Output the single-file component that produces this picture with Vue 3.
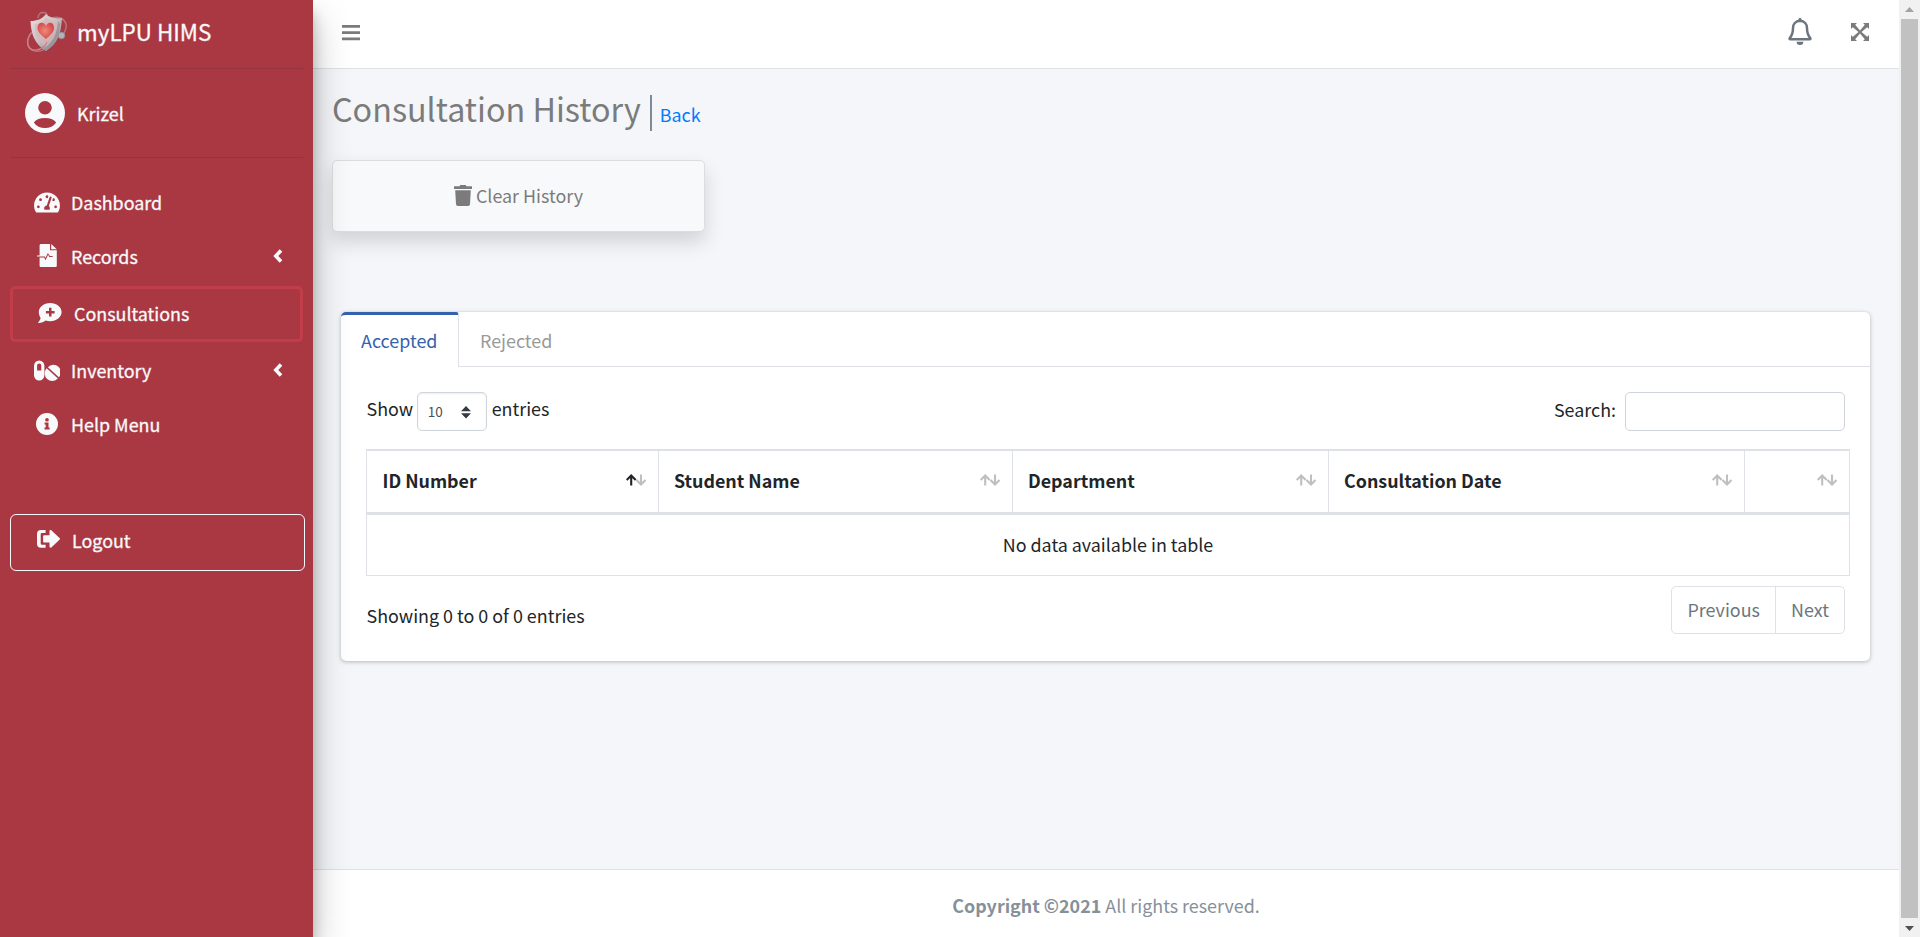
<script setup>
const columns = [
  { label: 'ID Number', sorted: true, cls: 'c1' },
  { label: 'Student Name', cls: 'c2' },
  { label: 'Department', cls: 'c3' },
  { label: 'Consultation Date', cls: 'c4' },
  { label: '', cls: 'c5' },
]
</script>

<template>
  <div class="page">
    <aside class="sidebar">
      <div class="brand">
        <svg class="logo" viewBox="0 0 42 42">
          <defs>
            <linearGradient id="steel" x1="0" y1="0" x2="1" y2="1">
              <stop offset="0" stop-color="#e9dfe0" />
              <stop offset=".5" stop-color="#c9bfc2" />
              <stop offset="1" stop-color="#767a80" />
            </linearGradient>
            <radialGradient id="heart" cx=".45" cy=".5" r=".6">
              <stop offset="0" stop-color="#f08a78" />
              <stop offset="1" stop-color="#d2424a" />
            </radialGradient>
          </defs>
          <path d="M12 7c0-4 3-5.500 5-5.500s4 1 4 3M26 7c6-2 12 0 14 6 1 4-1 7-2 9M6 21c-6 7-6 17 3 19 8 1 14-3 13-10" fill="none" stroke="#b9757b" stroke-width="1.500" />
          <path d="M20 3c4 4 10 5 16 4-1 14-3 25-16 33C8 33 5 22 4.500 10 11 10 16 8 20 3z" fill="url(#steel)" />
          <path d="M20 7c4 3 8 4 12 4-1 11-3 19-12 25C11 30 9 22 8.500 13 13 13 17 11 20 7z" fill="#d8b6b7" opacity=".75" />
          <path d="M34 13c-1 10-4 19-14 27l-3-2C28 31 31 22 32 10z" fill="#92949a" opacity=".8" />
          <path d="M20 28c-5-4-8.500-7-8.500-11 0-6 6.500-7 8.500-2 2-5 8-4 8 2 0 4-3.500 7-8 11z" fill="url(#heart)" />
          <path d="M5 22c-6 8-4 17 4 17 5 0 10-3 12-8" fill="none" stroke="#c58187" stroke-width="1.200" />
          <circle cx="35.500" cy="24.500" r="3.300" fill="#b9afb5" stroke="#8c8b93" stroke-width=".8" />
        </svg>
        <span class="brand-text">myLPU HIMS</span>
      </div>
      <div class="user">
        <svg class="avatar" viewBox="0 0 40 40">
          <path fill-rule="evenodd" d="M20 0a20 20 0 1 0 0 40 20 20 0 0 0 0-40zM20 8a6.800 6.800 0 1 1 0 13.600A6.800 6.800 0 0 1 20 8zM8.800 29.500C11 26.300 15 25 20 25s9 1.300 11.200 4.500C28.700 33.200 24.600 35 20 35s-8.700-1.800-11.200-5.500z" />
        </svg>
        <span>Krizel</span>
      </div>
      <nav class="menu">
        <a class="item">
          <svg class="ic wide" viewBox="0 0 576 512"><path d="M288 32C128.940 32 0 160.940 0 320c0 52.800 14.250 102.260 39.060 144.800 5.610 9.620 16.300 15.200 27.440 15.200h443c11.140 0 21.830-5.580 27.440-15.200C561.750 422.260 576 372.800 576 320c0-159.060-128.940-288-288-288zm0 64c14.710 0 26.580 10.130 30.320 23.650-1.110 2.260-2.640 4.230-3.450 6.670l-9.220 27.670c-5.130 3.490-10.970 6.010-17.640 6.010-17.670 0-32-14.330-32-32S270.330 96 288 96zM96 384c-17.670 0-32-14.330-32-32s14.330-32 32-32 32 14.330 32 32-14.330 32-32 32zm48-160c-17.670 0-32-14.330-32-32s14.330-32 32-32 32 14.330 32 32-14.330 32-32 32zm246.770-72.410l-61.330 184C343.130 347.330 352 364.540 352 384c0 11.720-3.380 22.550-8.880 32H232.880c-5.500-9.450-8.880-20.280-8.880-32 0-33.940 26.500-61.430 59.900-63.590l61.340-184.010c4.170-12.560 17.730-19.450 30.360-15.170 12.570 4.190 19.350 17.790 15.170 30.360zm14.660 57.200l15.520-46.550c3.470-1.290 7.130-2.230 11.050-2.230 17.670 0 32 14.330 32 32s-14.330 32-32 32c-11.380-.010-20.890-6.280-26.570-15.220zM480 384c-17.670 0-32-14.330-32-32s14.330-32 32-32 32 14.330 32 32-14.330 32-32 32z" /></svg>
          <span>Dashboard</span>
        </a>
        <a class="item">
          <svg class="ic file" viewBox="0 0 21 23">
            <path d="M4.300 0H13v6.200h6.800V21.800a1.200 1.200 0 0 1-1.200 1.200H3.800a1.200 1.200 0 0 1-1.200-1.200V13.600h4.600l1.300 2.600 2.600-5.500 1.200 2.300h3.300v-.9h-2.700L10.900 8.900 8.500 14l-.7-1.400H0v-1.100h2.600V1.500A1.500 1.500 0 0 1 4.300 0z" /><path d="M14.200 0l5.600 5.200h-5.600z" />
          </svg>
          <span>Records</span>
          <svg class="chev" viewBox="0 0 10 14"><path d="M8 1.500L2.800 7 8 12.500" /></svg>
        </a>
        <a class="item active">
          <svg class="ic chat" viewBox="0 0 24 21">
            <path fill-rule="evenodd" d="M12.200 0C18.600 0 23.600 4 23.600 9.100s-5 9.100-11.400 9.100c-1.700 0-3.300-.3-4.700-.8C5.900 18.600 3.400 20 .6 20c-.5 0-.6-.5-.3-.8 1-1.100 2-2.700 2.300-4.300C1.400 13.200.8 11.200.8 9.100.8 4 5.800 0 12.200 0zM11 4.800v3.100H7.900v2.500H11v3.100h2.500v-3.100h3.100V7.900h-3.100V4.800z" />
          </svg>
          <span>Consultations</span>
        </a>
        <a class="item">
          <svg class="ic wide" viewBox="0 0 26 20">
            <path fill-rule="evenodd" d="M5.200 0a5.200 5.200 0 0 1 5.200 5.200v9.600a5.200 5.200 0 0 1-10.400 0V5.200A5.200 5.200 0 0 1 5.200 0zm0 3A2.100 2.100 0 0 0 3.100 5.200V10h4.200V5.200A2.100 2.100 0 0 0 5.200 3z" />
            <path d="M12.700 7.700L23.900 18a7.200 7.200 0 0 1-11.200-10.300zM13.900 6.700A7.200 7.200 0 0 1 24.900 16.800z" />
          </svg>
          <span>Inventory</span>
          <svg class="chev" viewBox="0 0 10 14"><path d="M8 1.500L2.800 7 8 12.500" /></svg>
        </a>
        <a class="item">
          <svg class="ic info" viewBox="0 0 22 22"><path fill-rule="evenodd" d="M11 0a11 11 0 1 0 0 22 11 11 0 0 0 0-22zm0 4.900a1.850 1.850 0 1 1 0 3.700 1.850 1.850 0 0 1 0-3.700zM8.600 9.600h3.900v5h1.100v2H8.500v-2h1.200v-3H8.600z" /></svg>
          <span>Help Menu</span>
        </a>
      </nav>
      <a class="logout">
        <svg viewBox="0 0 23 18"><path d="M8.600 0v3H4.900a1.200 1.200 0 0 0-1.200 1.200v9.400a1.200 1.200 0 0 0 1.200 1.200h3.700v3H4a4 4 0 0 1-4-4V4a4 4 0 0 1 4-4zM14.300.3l8.200 7.700a1.100 1.100 0 0 1 0 1.700l-8.200 7.700c-.7.600-1.800.2-1.800-.8v-4.100H7.100a1 1 0 0 1-1-1V6.200a1 1 0 0 1 1-1h5.400V1.100c0-1 1.100-1.400 1.800-.8z" /></svg>
        <span>Logout</span>
      </a>
    </aside>

    <div class="main">
      <header class="topbar">
        <svg class="bars" viewBox="0 0 18 16"><path d="M0 0h18v2.700H0zM0 6.300h18V9H0zM0 12.600h18v2.700H0z" /></svg>
        <span class="spacer"></span>
        <svg class="bell" viewBox="0 0 24 27"><path d="M12 2.700C7.500 3 5 6.200 5 10c0 5.500-1.200 7.800-3.200 10-.5.700-.2 1.300.6 1.300h19.200c.8 0 1.100-.6.600-1.300-2-2.200-3.200-4.500-3.200-10 0-3.800-2.500-7-7-7.300z" fill="none" stroke="currentColor" stroke-width="2.500" /><path d="M10.500 1.300a1.500 1.300 0 0 1 3 0V3h-3zM8.600 23.700h6.800a3.400 3.300 0 0 1-6.800 0z" fill="currentColor" /></svg>
        <svg class="expand" viewBox="0 0 18 18"><path d="M0 0h6L4.200 1.800 9 7.500l4.800-5.700L12 0h6v6l-1.800-1.800L10.500 9l5.700 4.800L18 12v6h-6l1.800-1.800L9 10.500l-4.800 5.700L6 18H0v-6l1.800 1.800L7.500 9 1.800 4.200 0 6z" /></svg>
      </header>

      <main class="content">
        <div class="title">
          <h1>Consultation History</h1><span class="bar"></span><a class="back">Back</a>
        </div>
        <button class="clear">
          <svg viewBox="0 0 18 21"><path d="M5.600 1.200L6.200 0h5.600l.6 1.200H18v2.700H0V1.200zM1.200 5.300h15.600L16 19a2 2 0 0 1-2 2H4a2 2 0 0 1-2-2z" /></svg>
          <span>Clear History</span>
        </button>

        <section class="card">
          <div class="tabs">
            <a class="tab on">Accepted</a>
            <a class="tab">Rejected</a>
          </div>
          <div class="body">
            <div class="controls">
              <span class="show">Show</span>
              <span class="select"><span>10</span><svg viewBox="0 0 10 13"><path d="M5 0l5 5.300H0zM5 12.600L0 7.300h10z" /></svg></span>
              <span class="entries">entries</span>
              <span class="spacer"></span>
              <span class="search">Search:</span>
              <input class="field" type="text" />
            </div>
            <div class="table">
              <div class="thead">
                <div v-for="c in columns" :key="c.cls" class="th" :class="c.cls">
                  <span>{{ c.label }}</span>
                  <svg class="sort" viewBox="0 0 20 12">
                    <path class="up" d="M15 .5v10M10.500 6l4.500 4.500L19.500 6" />
                    <path class="up" :class="{ dark: c.sorted }" d="M5.200 11.500V1.500M.7 6l4.500-4.500L9.700 6" />
                  </svg>
                </div>
              </div>
              <div class="empty">No data available in table</div>
            </div>
            <div class="foot">
              <span class="info-text">Showing 0 to 0 of 0 entries</span>
              <span class="spacer"></span>
              <div class="pager"><a class="prev">Previous</a><a class="next">Next</a></div>
            </div>
          </div>
        </section>
      </main>

      <footer class="footer"><b>Copyright ©2021</b>&nbsp;<span>All rights reserved.</span></footer>
    </div>

    <div class="scroll">
      <svg class="arr" viewBox="0 0 21 19"><path d="M6 12l4.500-5 4.500 5z" fill="#a3a3a3" /></svg>
      <div class="thumb"></div>
      <svg class="arr" viewBox="0 0 21 19"><path d="M6 8l4.500 5L15 8z" fill="#505050" /></svg>
    </div>
  </div>
</template>

<style>
html, body { overflow: hidden; }
</style>

<style scoped>
.page, .page * { box-sizing: border-box; }
.page {
  display: flex;
  width: 1920px;
  height: 937px;
  overflow: hidden;
  font-family: "Noto Sans CJK SC", "Noto Sans", sans-serif;
  font-size: 17.900px;
  line-height: 24px;
  color: #212529;
  background: #f4f6f9;
}
svg { display: block; flex: none; }
.spacer { flex: 1; }

.sidebar {
  position: relative;
  z-index: 2;
  width: 313px;
  height: 937px;
  flex: none;
  background: #aa3843;
  color: #f8f9fa;
  fill: #f8f9fa;
  font-weight: 400;
  -webkit-text-stroke: .3px #f8f9fa;
  box-shadow: 0 17.500px 35px rgba(0, 0, 0, .25), 0 12.500px 12.500px rgba(0, 0, 0, .22);
}
.brand {
  display: flex;
  align-items: center;
  height: 69px;
  margin: 0 10px;
  padding: 0 0 5px 16px;
  border-bottom: 1px solid #96343e;
}
.logo { width: 42px; height: 42px; }
.brand-text { margin: -1px 0 0 9px; font-size: 22.400px; }
.user {
  display: flex;
  align-items: center;
  height: 89px;
  margin: 0 10px;
  padding: 0 0 1px 15px;
  border-bottom: 1px solid #96343e;
}
.avatar { width: 40px; height: 40px; }
.user span { margin-left: 12px; }
.menu { padding: 19px 10px 0; }
.item {
  display: flex;
  align-items: center;
  height: 50px;
  margin-bottom: 4px;
  padding-left: 24px;
}
.item span { width: 170px; }
.ic { margin-right: 11px; }
.ic.wide { width: 26px; height: 23px; }
.ic.file { width: 21px; height: 23px; margin: 0 13px 1px 3px; }
.ic.chat { width: 24px; height: 21px; margin: 0 12px 0 1px; }
.ic.info { width: 22px; height: 22px; margin: 0 13px 1px 2px; }
.chev { width: 10px; height: 14px; margin: 0 0 1px 32px; fill: none; stroke: #f8f9fa; stroke-width: 3.600; }
.item.active {
  height: 56px;
  margin: 5px 0 3px;
  padding-bottom: 2px;
  border: 3px solid #c03d49;
  border-radius: 5px;
}
.logout {
  display: flex;
  align-items: center;
  width: 295px;
  height: 57px;
  margin: 65px 0 0 10px;
  padding: 0 0 6px 26px;
  border: 1px solid #f8f9fa;
  border-radius: 6px;
}
.logout svg { width: 23px; height: 18px; margin: 0 12px 1px 0; }

.main {
  display: flex;
  flex-direction: column;
  width: 1586px;
  height: 937px;
}
.topbar {
  display: flex;
  align-items: center;
  height: 69px;
  padding: 0 29px 3px;
  background: #fff;
  border-bottom: 1px solid #dee2e6;
  color: #6c757d;
}
.bars { width: 18px; height: 16px; fill: #7b7b7b; }
.bell { width: 24px; height: 27px; margin: 0 39px 2px 0; }
.expand { width: 18px; height: 18px; margin: 0 1px 1px 0; fill: #7b7b7b; }

.content { flex: 1; padding: 0 29px 0 28px; }
.title {
  display: flex;
  align-items: center;
  height: 91px;
  margin-left: -9px;
  padding-bottom: 12px;
}
h1 {
  margin: -1px 0 0;
  font-size: 32.300px;
  font-weight: 400;
  line-height: 44px;
  color: #7b7b7b;
}
.bar { width: 2px; height: 36px; margin: 8px 8px 0 9px; background: #7f8a92; }
.back { margin-top: 11px; color: #007bff; }
.clear {
  display: flex;
  align-items: center;
  justify-content: center;
  width: 373px;
  height: 72px;
  margin-left: -9px;
  padding: 0;
  border: 1px solid #ddd;
  border-radius: 5px;
  background: #f8f9fa;
  color: #7b7b7b;
  fill: #7b7b7b;
  font: inherit;
  box-shadow: 0 10px 20px rgba(0, 0, 0, .15);
}
.clear svg { width: 18px; height: 21px; margin: 0 4px 1px 0; }
.clear span { margin-top: -2px; }

.card {
  width: 1529px;
  height: 349px;
  margin-top: 80px;
  background: #fff;
  border-radius: 5px;
  box-shadow: 0 0 1px rgba(0, 0, 0, .125), 0 1px 4px rgba(0, 0, 0, .25);
}
.tabs { display: flex; height: 55px; border-bottom: 1px solid #dee2e6; }
.tab { padding: 16px 21px 0 21px; color: #999; }
.tab.on {
  width: 118px;
  height: 55px;
  padding: 13px 0 0 20px;
  border-top: 3px solid #3561ad;
  border-right: 1px solid #dee2e6;
  border-radius: 5px 3px 0 0;
  background: #fff;
  color: #3561ad;
}
.body { padding: 25px 20px 0 25px; }
.controls { display: flex; height: 39px; padding-right: 5px; }
.show { margin-top: 4px; padding-left: .5px; }
.entries { margin: 4px 0 0 5px; }
.select {
  display: flex;
  align-items: center;
  width: 70px;
  height: 39px;
  margin-left: 3.500px;
  padding: 0 15px 0 10px;
  justify-content: space-between;
  border: 1px solid #ced4da;
  border-radius: 5px;
  color: #495057;
  font-size: 13.500px;
  box-shadow: inset 0 1px 2px rgba(0, 0, 0, .075);
}
.select span { margin-top: -1px; }
.select svg { width: 10px; height: 13px; margin-top: 1px; fill: #343a40; }
.search { margin: 5px 9px 0 0; }
.field { width: 220px; height: 39px; border: 1px solid #ced4da; border-radius: 5px; background: #fff; }
.table {
  height: 127px;
  margin-top: 18px;
  border: 1px solid #dee2e6;
  border-top-width: 2px;
}
.thead { display: flex; height: 64px; border-bottom: 3px solid #dee2e6; }
.th {
  display: flex;
  justify-content: space-between;
  padding: 17px 12px 0 15px;
  border-right: 1px solid #dee2e6;
  font-weight: 700;
  font-size: 17.850px;
}
.th:last-child { border-right: 0; }
.c1 { width: 292px; padding-left: 15.500px; }
.c2 { width: 354px; }
.c3 { width: 316px; }
.c4 { width: 416px; }
.c5 { flex: 1; }
.sort { width: 20px; height: 12px; margin-top: 6px; }
.up { fill: none; stroke: #bfbfbf; stroke-width: 2.100; }
.dark { stroke: #212529; }
.empty { padding-top: 17px; text-align: center; }
.foot { display: flex; padding: 10px 5px 0 .5px; }
.info-text { margin-top: 17px; }
.pager {
  display: flex;
  width: 174px;
  height: 48px;
  border: 1px solid #dee2e6;
  border-radius: 5px;
  color: #6c757d;
}
.pager a { padding-top: 10px; }
.prev { width: 104px; padding-left: 15.500px; border-right: 1px solid #dee2e6; }
.next { padding-left: 15px; }

.footer {
  display: flex;
  justify-content: center;
  height: 68px;
  padding-top: 23px;
  border-top: 1px solid #dee2e6;
  background: #fff;
  color: #869099;
}

.scroll { width: 21px; height: 937px; background: #f1f1f1; }
.arr { width: 21px; height: 19px; }
.thumb { width: 17px; height: 899px; margin-left: 2px; background: #c1c1c1; }
</style>
